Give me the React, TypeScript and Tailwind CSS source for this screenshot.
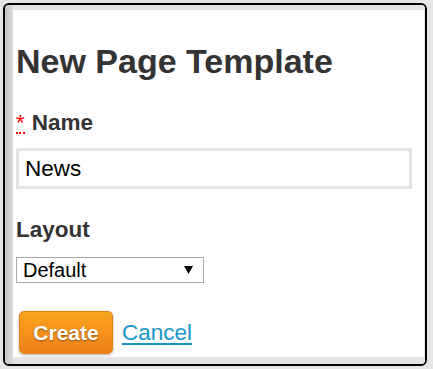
import React from 'react';

function App() {
  return (
    <div
      className="w-[433px] h-[369px] bg-[#e6e6e6] pt-[3px] pl-[3px]"
      style={{ fontFamily: '"Liberation Sans", Arial, sans-serif' }}
    >
      <div className="w-[424px] h-[363px] border-2 border-black rounded-[6px] overflow-hidden flex bg-white">
        {/* left shade */}
        <div className="w-[8px] bg-gradient-to-r from-[#c2c2c2] to-[#dcdcdc]" />
        <div className="flex-1 flex flex-col">
          <div className="h-[5px] bg-[#e4e4e4]" />
          <div className="flex-1 bg-white pl-[3px] pt-[31px]">
            <h1 className="text-[34px] leading-[40px] font-bold text-[#333]">New Page Template</h1>

            <label className="mt-[29px] flex items-baseline text-[22.5px] leading-[26px] font-bold text-[#333]">
              <span className="text-[#f00] font-normal border-b-2 border-dotted border-[#f00] leading-[18px] mr-[7px]">*</span>
              Name
            </label>
            <input
              defaultValue="News"
              className="mt-[12px] block w-[396px] h-[41px] border-[3px] border-[#e3e3e3] pl-[6px] text-[22.5px] text-black outline-none"
            />

            <div className="mt-[28px] text-[22.5px] leading-[26px] font-bold text-[#333]">Layout</div>
            <div className="relative mt-[14px] w-[188px] h-[26px]">
              <select className="appearance-none w-full h-full border border-[#a9a9a9] bg-white pl-[6px] text-[20px] leading-[24px] text-black outline-none">
                <option>Default</option>
              </select>
              <svg className="absolute right-[11px] top-[9px] pointer-events-none" width="9" height="8" viewBox="0 0 9 8">
                <polygon points="0,0 9,0 4.5,8" fill="#000" />
              </svg>
            </div>

            <div className="mt-[28px] flex items-center">
              <button className="ml-[3px] w-[94px] h-[43px] rounded-[5px] border border-[#e2810f] bg-gradient-to-b from-[#f9a51d] to-[#f07e1b] text-white text-[21px] font-bold shadow-[0_1px_3px_rgba(0,0,0,0.3)] [text-shadow:0_1px_2px_rgba(0,0,0,0.45)]">
                Create
              </button>
              <a href="#" className="ml-[9px] text-[22.5px] text-[#1596c9] underline underline-offset-[3px]">
                Cancel
              </a>
            </div>
          </div>
          <div className="h-[7px] bg-[#e4e4e4]" />
        </div>
        <div className="w-[1px] bg-[#e4e4e4]" />
      </div>
    </div>
  );
}

export default App;
